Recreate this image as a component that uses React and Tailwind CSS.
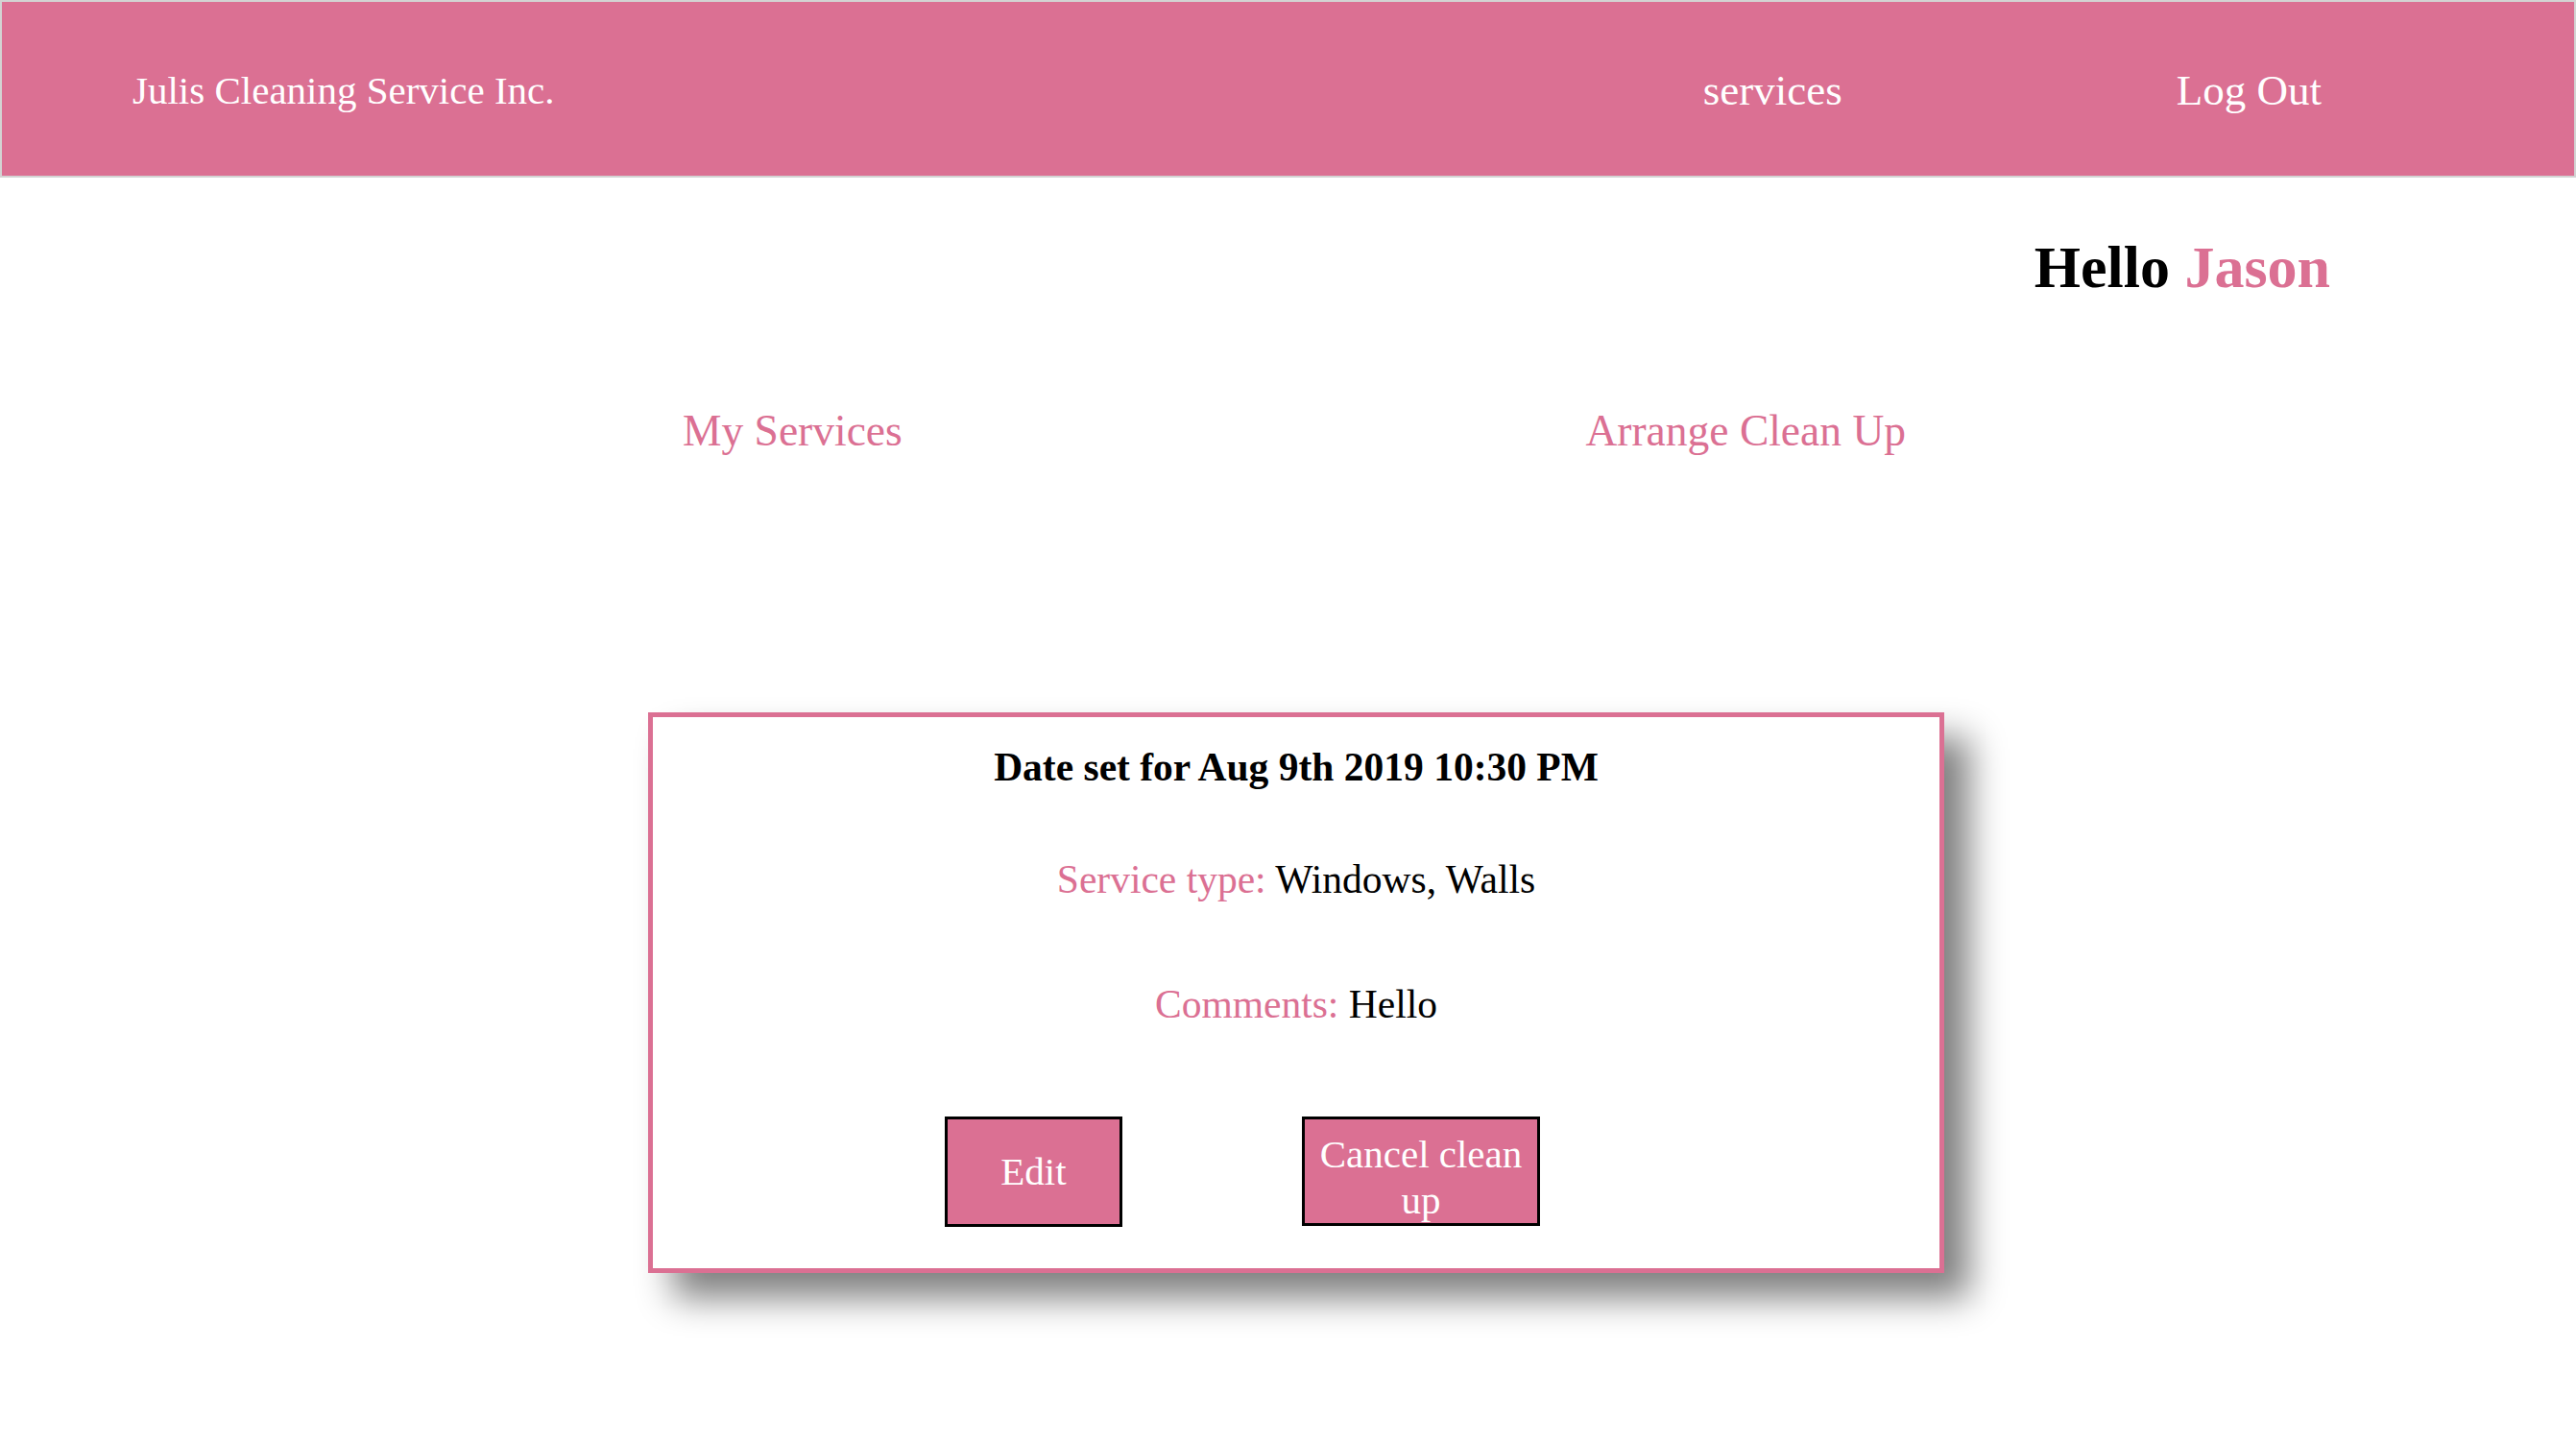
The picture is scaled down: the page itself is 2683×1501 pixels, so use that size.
export default function App() {
  return (
    <div className="min-h-screen bg-white font-['Liberation_Serif','Times_New_Roman',serif] leading-[1.15] text-black">
      <header className="flex h-[185px] items-center border-2 border-[#d3d3d3] bg-[#db7093] pt-[4px] text-white">
        <div className="pl-[136px] text-[41px]">Julis Cleaning Service Inc.</div>
        <nav className="ml-auto flex gap-[348px] pr-[263px] text-[45px]">
          <a className="cursor-pointer">services</a>
          <a className="cursor-pointer">Log Out</a>
        </nav>
      </header>

      <div className="mt-[58px] flex justify-end pr-[256px]">
        <h1 className="text-[62px] font-bold leading-[1.15]">
          Hello <span className="text-[#db7093]">Jason</span>
        </h1>
      </div>

      <div className="ml-[675px] mt-[109px] flex w-[1350px] justify-between pl-[36px] pr-[40px] text-[45.5px] text-[#db7093]">
        <a className="cursor-pointer">My Services</a>
        <a className="cursor-pointer">Arrange Clean Up</a>
      </div>

      <div className="ml-[675px] mt-[266px] w-[1350px] border-[5px] border-[#db7093] bg-white pb-[43px] pt-[29px] text-center text-[41.5px] shadow-[26px_26px_35px_gray]">
        <h2 className="font-bold">Date set for Aug 9th 2019 10:30 PM</h2>
        <p className="mt-[70px]">
          <span className="text-[#db7093]">Service type:</span> Windows, Walls
        </p>
        <p className="mt-[82px]">
          <span className="text-[#db7093]">Comments:</span> Hello
        </p>
        <div className="mt-[92px] flex items-start gap-[187px] pl-[304px]">
          <button className="flex h-[115px] w-[185px] items-center justify-center border-[3px] border-black bg-[#db7093] text-[41px] text-white">
            Edit
          </button>
          <button className="h-[114px] w-[248px] border-[3px] border-black bg-[#db7093] px-[10px] pt-[12px] text-[41px] leading-[48px] text-white">
            <span className="block">Cancel clean</span>
            <span className="block">up</span>
          </button>
        </div>
      </div>
    </div>
  );
}
